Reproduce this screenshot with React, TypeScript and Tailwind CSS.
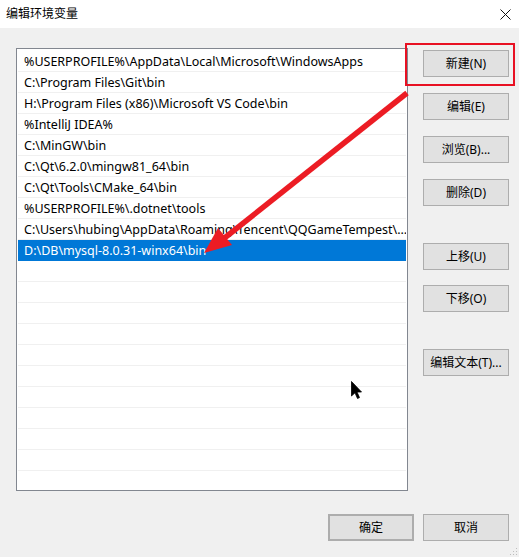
import React from 'react';

const paths = [
  '%USERPROFILE%\\AppData\\Local\\Microsoft\\WindowsApps',
  'C:\\Program Files\\Git\\bin',
  'H:\\Program Files (x86)\\Microsoft VS Code\\bin',
  '%IntelliJ IDEA%',
  'C:\\MinGW\\bin',
  'C:\\Qt\\6.2.0\\mingw81_64\\bin',
  'C:\\Qt\\Tools\\CMake_64\\bin',
  '%USERPROFILE%\\.dotnet\\tools',
  'C:\\Users\\hubing\\AppData\\Roaming\\Tencent\\QQGameTempest\\...',
  'D:\\DB\\mysql-8.0.31-winx64\\bin',
];

const SELECTED = 9;
const ROW_COUNT = 20;

function WinButton({ label, className = '' }: { label: string; className?: string }) {
  return (
    <div
      className={`h-[27px] w-[86px] flex items-center justify-center bg-[#e1e1e1] border border-[#adadad] text-[12px] text-black ${className}`}
    >
      {label}
    </div>
  );
}

export default function App() {
  const rows = Array.from({ length: ROW_COUNT }, (_, i) => paths[i] ?? '');

  return (
    <div
      className="relative w-[519px] h-[557px] flex flex-col bg-white overflow-hidden"
      style={{ fontFamily: '"Noto Sans", "Noto Sans CJK SC", sans-serif' }}
    >
      {/* title bar */}
      <div className="h-[28px] flex items-center justify-between pl-[6px] pr-[7px] bg-white">
        <span className="text-[12px] text-black">编辑环境变量</span>
        <svg width="11" height="11" viewBox="0 0 11 11" className="mr-[1px]">
          <path d="M0.5 0.5 L10.5 10.5 M10.5 0.5 L0.5 10.5" stroke="#111" strokeWidth="1" />
        </svg>
      </div>

      {/* body */}
      <div className="flex-1 bg-[#f0f0f0] flex flex-col pt-[20px] pl-[16px] pr-[10px]">
        <div className="flex">
          <div className="w-[392px] h-[443px] bg-white border border-[#828790] pt-[2px]">
            {rows.map((p, i) => (
              <div
                key={i}
                className={`mx-[1px] h-[21px] pl-[6px] pt-[2px] flex items-center text-[12.5px] whitespace-nowrap overflow-hidden border-b ${
                  i === SELECTED
                    ? 'bg-[#0078d7] text-white border-[#0078d7]'
                    : 'text-black border-[#f0f0f0]'
                }`}
              >
                {p}
              </div>
            ))}
          </div>

          <div className="ml-[15px] pt-[2px] flex flex-col">
            <WinButton label="新建(N)" />
            <WinButton label="编辑(E)" className="mt-[16px]" />
            <WinButton label="浏览(B)..." className="mt-[16px]" />
            <WinButton label="删除(D)" className="mt-[16px]" />
            <WinButton label="上移(U)" className="mt-[37px]" />
            <WinButton label="下移(O)" className="mt-[15px]" />
            <WinButton label="编辑文本(T)..." className="mt-[37px]" />
          </div>
        </div>

        <div className="mt-[23px] flex justify-end gap-[9px]">
          <WinButton label="确定" className="border-2 border-[#0078d7]" />
          <WinButton label="取消" />
        </div>
      </div>

      {/* red highlight around 新建 */}
      <div className="absolute left-[405px] top-[43px] w-[110px] h-[43px] border-2 border-[#e81123]" />

      {/* red arrow */}
      <svg className="absolute left-0 top-0 pointer-events-none" width="519" height="557">
        <line x1="407" y1="93" x2="222" y2="240" stroke="#ec1c24" strokeWidth="5.5" />
        <polygon points="204,253 232,245 218,228" fill="#ec1c24" />
      </svg>

      {/* mouse pointer */}
      <svg className="absolute left-[351px] top-[381px]" width="12" height="19" viewBox="0 0 12 19">
        <path d="M0.5 0.5 L0.5 15 L4 11.8 L6.5 17.5 L8.5 16.6 L6 11 L10.5 11 Z" fill="#000" stroke="#000" strokeWidth="0.8" />
      </svg>

      {/* resize grip */}
      <svg className="absolute right-[1px] bottom-[1px]" width="10" height="10">
        <rect x="8" y="2" width="1" height="1" fill="#bdbdbd" />
        <rect x="5" y="5" width="1" height="1" fill="#bdbdbd" />
        <rect x="8" y="5" width="1" height="1" fill="#bdbdbd" />
        <rect x="2" y="8" width="1" height="1" fill="#bdbdbd" />
        <rect x="5" y="8" width="1" height="1" fill="#bdbdbd" />
        <rect x="8" y="8" width="1" height="1" fill="#bdbdbd" />
      </svg>
    </div>
  );
}
